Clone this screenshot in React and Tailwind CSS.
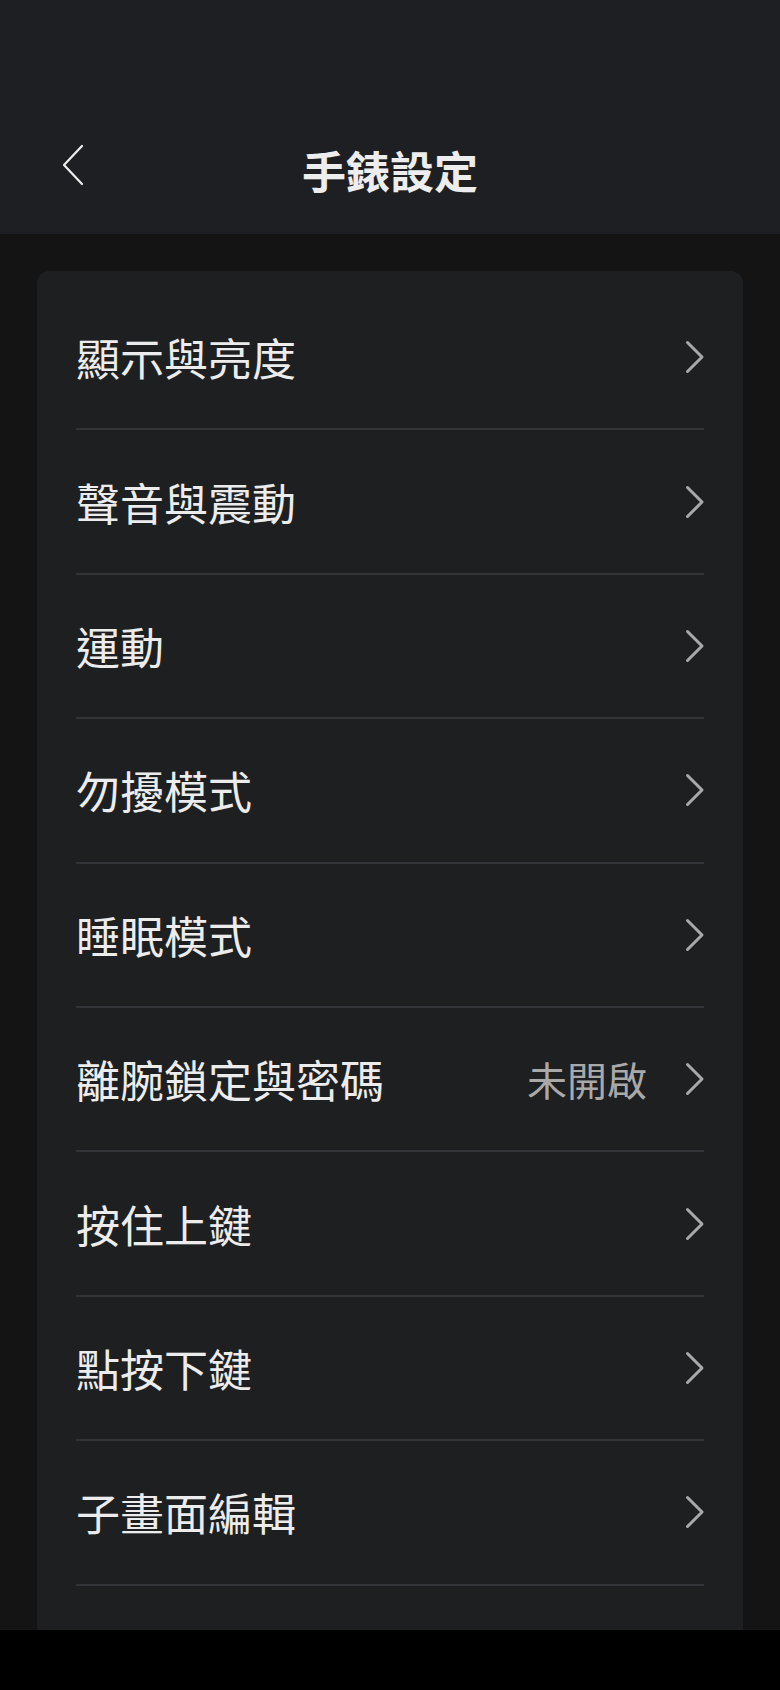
const items = [
  { label: '顯示與亮度' },
  { label: '聲音與震動' },
  { label: '運動' },
  { label: '勿擾模式' },
  { label: '睡眠模式' },
  { label: '離腕鎖定與密碼', value: '未開啟' },
  { label: '按住上鍵' },
  { label: '點按下鍵' },
  { label: '子畫面編輯' },
];

const font = { fontFamily: '"Noto Sans CJK TC", "Noto Sans", sans-serif' };

function Row({ label, value }) {
  return (
    <div className="flex h-[144.4px] items-center border-b-2 border-[#333437]">
      <span className="flex-1 text-[44px] leading-none text-[#ececec]">{label}</span>
      {value && <span className="mr-[38px] text-[40px] leading-none text-[#a9a9a9]">{value}</span>}
      <svg width="20" height="34" viewBox="0 0 20 34" className="mr-[-1px]">
        <path d="M2.5 2.5 L17 17 L2.5 31.5" fill="none" stroke="#a9a9a9" strokeWidth="3" strokeLinecap="round" strokeLinejoin="round" />
      </svg>
    </div>
  );
}

export default function App() {
  return (
    <div className="flex h-[1690px] flex-col overflow-hidden bg-black" style={font}>
      {/* Header */}
      <header className="relative flex h-[234px] shrink-0 items-end bg-[#1e1f22] pb-[42px]">
        <button className="absolute left-[60px] top-[144px]">
          <svg width="26" height="42" viewBox="0 0 26 42">
            <path d="M22 2 L4 21 L22 40" fill="none" stroke="#ededed" strokeWidth="2.2" strokeLinecap="round" strokeLinejoin="round" />
          </svg>
        </button>
        <h1 className="w-full text-center text-[44px] font-bold leading-none text-[#ededed]">手錶設定</h1>
      </header>

      {/* Content */}
      <main className="h-[1396px] shrink-0 overflow-hidden bg-[#141414] px-[37px] pt-[37px]">
        <div className="rounded-t-[12px] bg-[#1e1f21] px-[39px] pt-[15px] pb-[60px]">
          {items.map((it) => (
            <Row key={it.label} {...it} />
          ))}
        </div>
      </main>

      <div className="flex-1 bg-black" />
    </div>
  );
}
